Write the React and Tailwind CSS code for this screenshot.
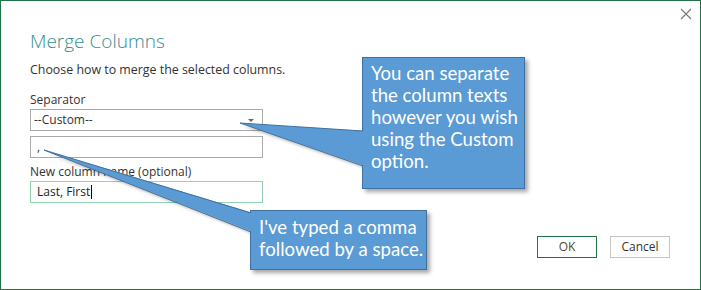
import React from 'react';

const BLUE = '#5b9bd5';
const EDGE = '#41719c';

// tip + two base points on the box's left edge
const POINTERS = [
    { tip: [239, 122], a: [362, 130], b: [362, 165] },
    { tip: [43, 149], a: [250, 212], b: [250, 231] },
];

function PointerLayer({ shadow }) {
    return (
        <svg className="absolute left-0 top-0 pointer-events-none" width="701" height="290">
            {POINTERS.map((p, i) => {
                const pts = `${p.tip[0]},${p.tip[1]} ${p.a[0] + 2},${p.a[1]} ${p.b[0] + 2},${p.b[1]}`;
                if (shadow) {
                    return (
                        <polygon key={i} points={pts} fill="rgba(0,0,0,0.28)" transform="translate(3 3)" style={{ filter: 'blur(1.5px)' }} />
                    );
                }
                return (
                    <g key={i}>
                        <polygon points={pts} fill={BLUE} />
                        <line x1={p.tip[0]} y1={p.tip[1]} x2={p.a[0]} y2={p.a[1]} stroke={EDGE} strokeWidth="1" />
                        <line x1={p.tip[0]} y1={p.tip[1]} x2={p.b[0]} y2={p.b[1]} stroke={EDGE} strokeWidth="1" />
                    </g>
                );
            })}
        </svg>
    );
}

function Callout({ className, children }) {
    return (
        <div
            className={`absolute bg-[#5b9bd5] border border-[#41719c] text-white text-[18.6px] leading-[22px] shadow-[3px_3px_4px_rgba(0,0,0,0.35)] ${className}`}
            style={{ fontFamily: 'Lato, "Open Sans", sans-serif' }}
        >
            {children}
        </div>
    );
}

export default function App() {
    return (
        <div
            className="relative w-[701px] h-[290px] bg-white border border-[#217346] overflow-hidden text-[#444]"
            style={{ fontFamily: '"Open Sans", "Noto Sans", sans-serif' }}
        >
            {/* close */}
            <svg className="absolute left-[679px] top-[7px]" width="12" height="12" viewBox="0 0 12 12">
                <path d="M1 1 L11 11 M11 1 L1 11" stroke="#777" strokeWidth="1.1" fill="none" />
            </svg>

            <div className="pl-[29px] pt-[27px] w-[262px]">
                <h1 className="text-[19px] leading-[26px] font-light text-[#3a8d90]">Merge Columns</h1>
                <p className="mt-[8px] text-[12.4px] leading-[16px] text-[#333] whitespace-nowrap">Choose how to merge the selected columns.</p>

                <div className="mt-[14px] text-[12px] leading-[16px] text-[#333]">Separator</div>
                <div className="mt-[1px] h-[22px] border border-[#a9a9a9] flex items-center justify-between pl-[3px] pr-[8px] text-[12px] text-[#333]">
                    <span>--Custom--</span>
                    <span className="w-0 h-0 border-l-[3px] border-r-[3px] border-t-[3px] border-l-transparent border-r-transparent border-t-[#666]" />
                </div>
                <div className="mt-[5px] h-[22px] border border-[#a9a9a9] flex items-center pl-[6px] text-[12px] text-[#333]">
                    <span>, </span>
                </div>

                <div className="mt-[6px] text-[12px] leading-[16px] text-[#333]">New column name (optional)</div>
                <div className="mt-[1px] h-[22px] border border-[#93d3b0] flex items-center pl-[6px] text-[12px] text-[#222]">
                    <span>Last, First</span>
                    <span className="ml-[1px] w-px h-[14px] bg-black" />
                </div>
            </div>

            <div className="flex justify-end gap-[13px] pr-[30px] mt-[33px]">
                <button className="w-[60px] h-[22px] border border-[#217346] text-[12px] text-[#4a4a2a]">OK</button>
                <button className="w-[60px] h-[22px] border border-[#c4c4c4] text-[12px] text-[#333]">Cancel</button>
            </div>

            <PointerLayer shadow />

            <Callout className="left-[361px] top-[56px] w-[163px] h-[132px] pl-[8px] pt-[4px]">
                You can separate<br />the column texts<br />however you wish<br />using the Custom<br />option.
            </Callout>

            <Callout className="left-[249px] top-[209px] w-[177px] h-[60px] pl-[8px] pt-[5px]">
                I've typed a comma<br />followed by a space.
            </Callout>

            <PointerLayer />
        </div>
    );
}
